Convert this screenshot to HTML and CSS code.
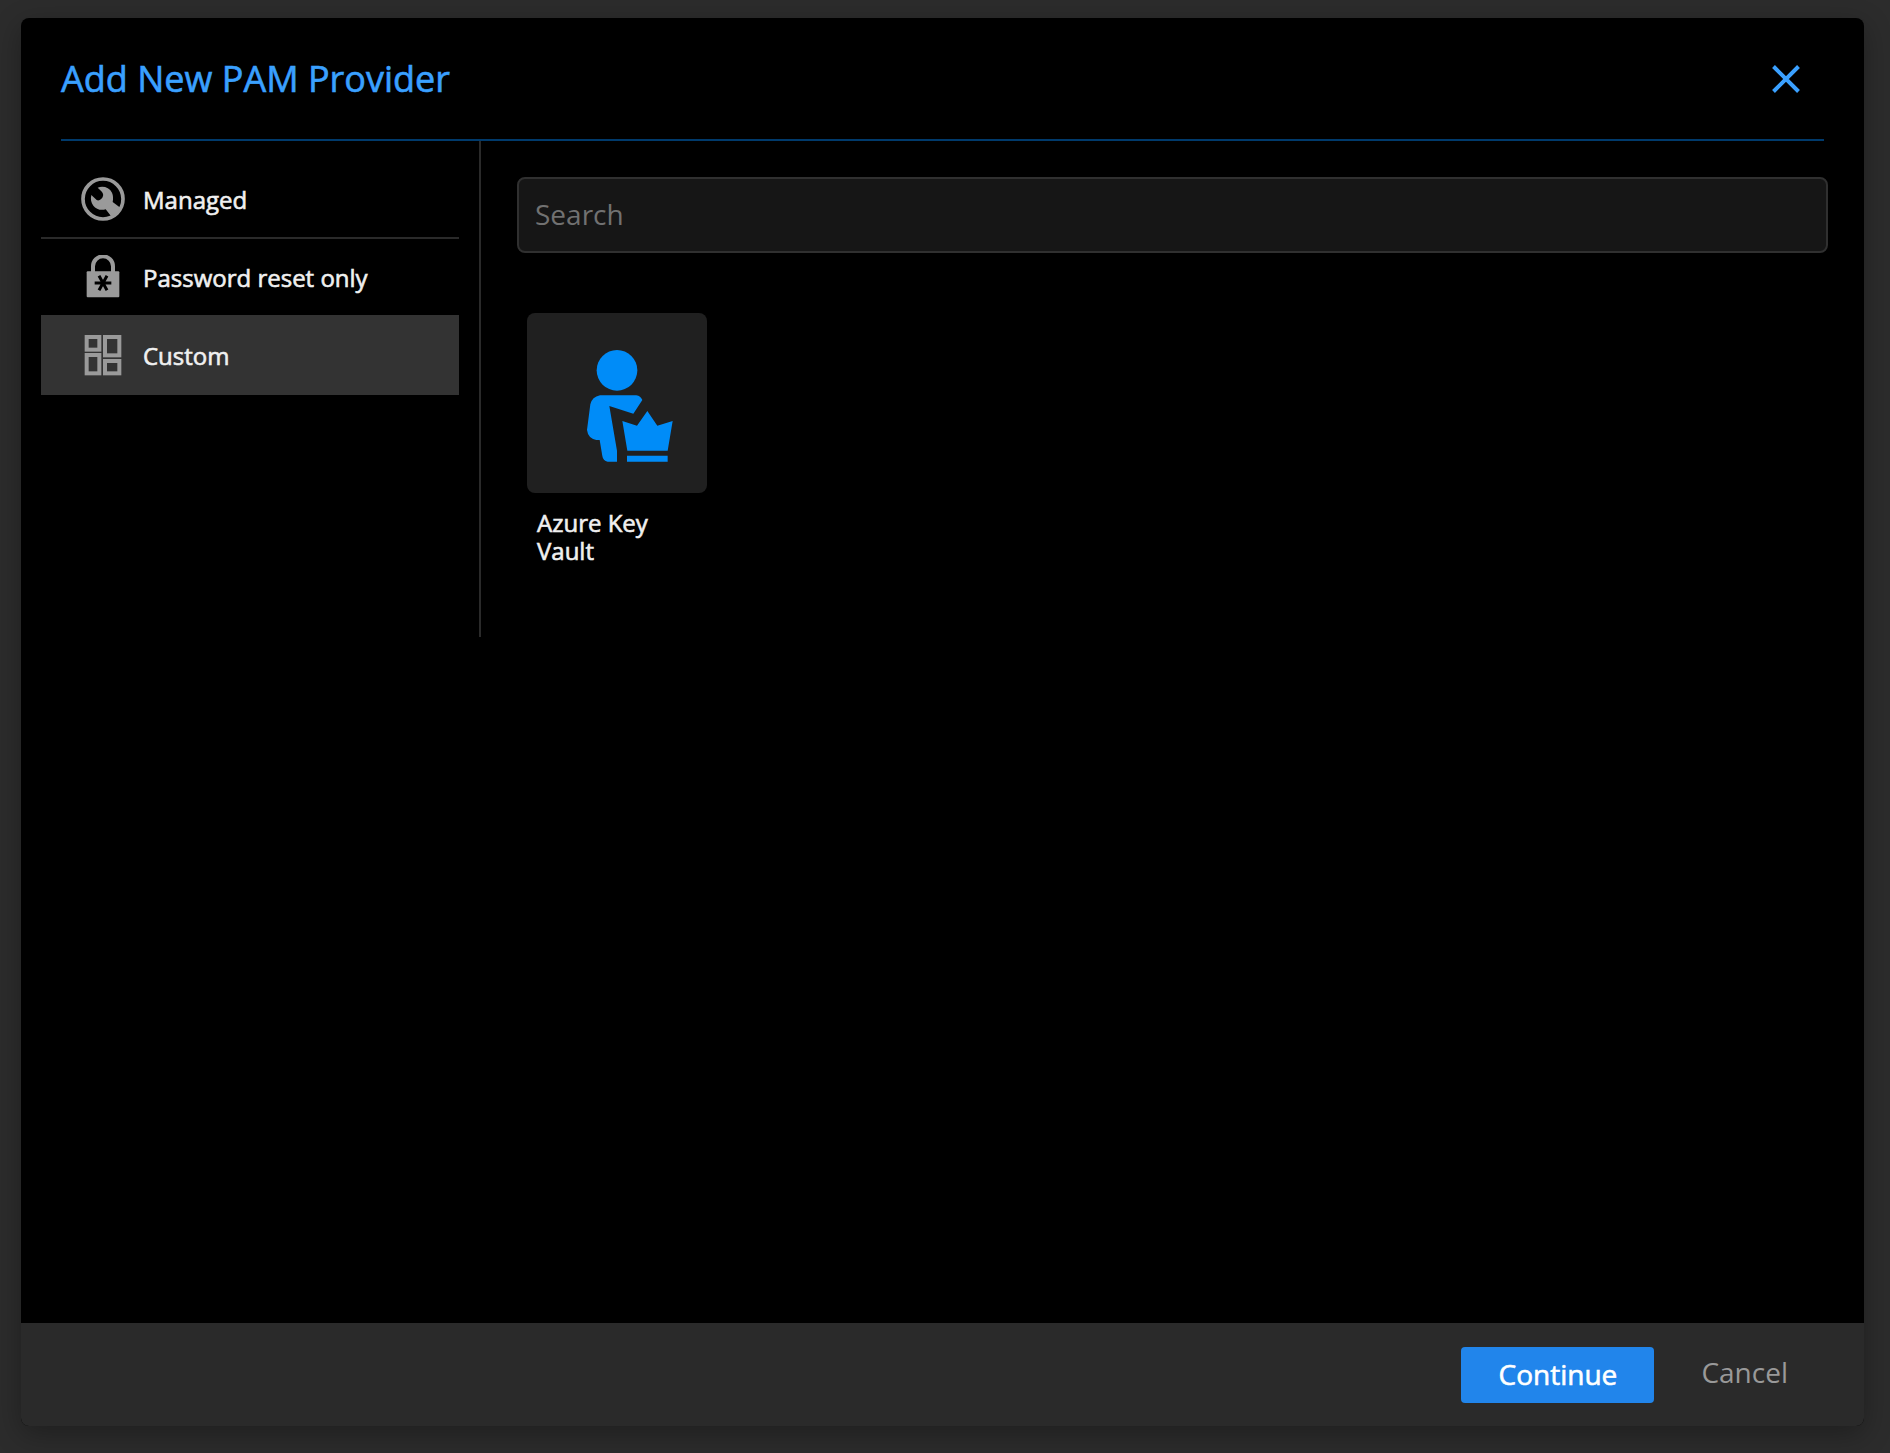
FILE: index.html
```html
<!DOCTYPE html>
<html lang="en">
<head>
  <meta charset="utf-8">
  <title>Add New PAM Provider</title>
  <link rel="stylesheet" href="styles.css">
</head>
<body>
  <main class="modal" role="dialog" aria-labelledby="modal-title">
    <header class="modal-header">
      <h1 class="modal-title" id="modal-title">Add New PAM Provider</h1>
      <button class="close" type="button" aria-label="Close">
        <svg width="28" height="28" viewBox="0 0 28 28" fill="none" stroke="currentColor" stroke-width="4"><path d="M1.5 1.5l25 25M26.5 1.5l-25 25"/></svg>
      </button>
    </header>
    <div class="modal-body">
      <nav class="sidebar">
        <button class="tab" type="button">
          <svg class="tab-icon" viewBox="0 0 132 132" fill="currentColor">
            <circle cx="66" cy="66" r="60" fill="none" stroke="currentColor" stroke-width="11"/>
            <path d="M50 32C66 26 85 31 93 47C97 56 97 66 95 75L120 94L94 122L74 97C60 101 45 97 37 86C30 77 28 66 31 54L47 69C54 73 64 66 66 57C68 50 64 44 50 32Z"/>
          </svg>
          <span>Managed</span>
        </button>
        <button class="tab" type="button">
          <svg class="tab-icon" viewBox="0 0 132 132">
            <path d="M36 54V34a30 30 0 0 1 60 0V54" fill="none" stroke="currentColor" stroke-width="12"/>
            <rect x="17" y="49" width="98" height="78" rx="3" fill="currentColor"/>
            <path d="M41 84H91M54 62L78 106M78 62L54 106" fill="none" stroke="#000" stroke-width="9"/>
          </svg>
          <span>Password reset only</span>
        </button>
        <button class="tab tab-active" type="button" aria-current="true">
          <svg class="tab-icon" viewBox="0 0 132 132" fill="none" stroke="currentColor" stroke-width="12">
            <rect x="17" y="12" width="38" height="38"/>
            <rect x="72" y="12" width="43" height="55"/>
            <rect x="17" y="66" width="38" height="55"/>
            <rect x="72" y="84" width="43" height="37"/>
          </svg>
          <span>Custom</span>
        </button>
      </nav>
      <section class="content">
        <input class="search" type="text" placeholder="Search" aria-label="Search">
        <div class="providers">
          <button class="provider" type="button">
            <svg class="provider-tile" viewBox="0 -2 540 540" fill="#008cf8">
              <circle cx="270" cy="170" r="61"/>
              <path d="M219 245H328Q341 247 346 259L319 300L247 277L270 411V444H242Q228 441 226 427L218 379H208Q183 374 180 349L190 272Q195 250 219 245Z"/>
              <path d="M286 322L330 336L361 292L391 336L437 322L422 411H301ZM300 426H422V444H300Z"/>
            </svg>
            <span class="provider-name">Azure Key Vault</span>
          </button>
        </div>
      </section>
    </div>
    <footer class="modal-footer">
      <button class="continue" type="button">Continue</button>
      <button class="cancel" type="button">Cancel</button>
    </footer>
  </main>
</body>
</html>
```
FILE: styles.css
```css
* { box-sizing: border-box; }

body {
  display: flex;
  min-height: 100vh;
  margin: 0;
  padding: 18px 26px 27px 21px;
  background: #2c2c2c;
  font-family: "Open Sans", "Noto Sans", sans-serif;
}

button {
  margin: 0;
  padding: 0;
  border: 0;
  background: none;
  color: inherit;
  font: inherit;
  cursor: pointer;
}

svg { display: block; }

/* Medium weight: a hairline stroke over the regular face */
.modal-title,
.tab,
.provider-name,
.continue {
  -webkit-text-stroke: 0.6px currentColor;
}

.modal {
  display: flex;
  flex: 1;
  flex-direction: column;
  overflow: hidden;
  border-radius: 8px;
  background: #000;
  box-shadow: 0 8px 28px rgba(0, 0, 0, 0.3);
}

.modal-header {
  display: flex;
  align-items: center;
  justify-content: space-between;
  height: 123px;
  margin: 0 40px;
  padding-right: 24px;
  border-bottom: 2px solid #003a6c;
  color: #3aa0ff;
}

.modal-title {
  margin: 0;
  font-size: 36px;
  font-weight: 400;
  line-height: 48px;
}

.modal-body {
  display: flex;
  flex: 1;
  align-items: flex-start;
}

.sidebar {
  width: 460px;
  min-height: 496px;
  padding: 18px 20px 0;
  border-right: 2px solid #2a2a2a;
}

.tab {
  display: flex;
  align-items: center;
  gap: 18px;
  width: 100%;
  height: 78px;
  padding-left: 40px;
  border-top: 2px solid #2a2a2a;
  color: #f0f0f0;
  font-size: 24px;
}

.tab:first-child { border-top-color: transparent; }

.tab-active {
  height: 80px;
  border-bottom: 2px solid #333;
  border-top-color: #333;
  background: #333;
}

.tab-icon {
  width: 44px;
  height: 44px;
  color: #9a9a9a;
}

.content {
  flex: 1;
  padding: 36px 36px 0;
}

.search {
  display: block;
  width: 100%;
  height: 76px;
  padding: 0 16px 2px;
  border: 2px solid #303030;
  border-radius: 8px;
  outline: 0;
  background: #161616;
  color: #f0f0f0;
  font: inherit;
  font-size: 28px;
}

.search::placeholder { color: #717171; opacity: 1; }

.providers {
  display: flex;
  flex-wrap: wrap;
  gap: 20px;
  padding: 60px 10px 0;
}

.provider {
  width: 180px;
  color: #f0f0f0;
  text-align: left;
}

.provider-tile {
  width: 180px;
  height: 180px;
  border-radius: 8px;
  background: #202020;
}

.provider-name {
  display: block;
  padding: 16px 10px 0;
  font-size: 24px;
  line-height: 28px;
}

.modal-footer {
  display: flex;
  align-items: center;
  justify-content: flex-end;
  gap: 23px;
  height: 103px;
  padding: 0 52px;
  background: #2a2a2a;
  font-size: 28px;
}

.continue {
  width: 193px;
  height: 56px;
  padding-bottom: 2px;
  border-radius: 4px;
  background: #2185eb;
  color: #fff;
}

.cancel {
  height: 56px;
  padding: 0 24px 6px;
  color: #999;
}
```
